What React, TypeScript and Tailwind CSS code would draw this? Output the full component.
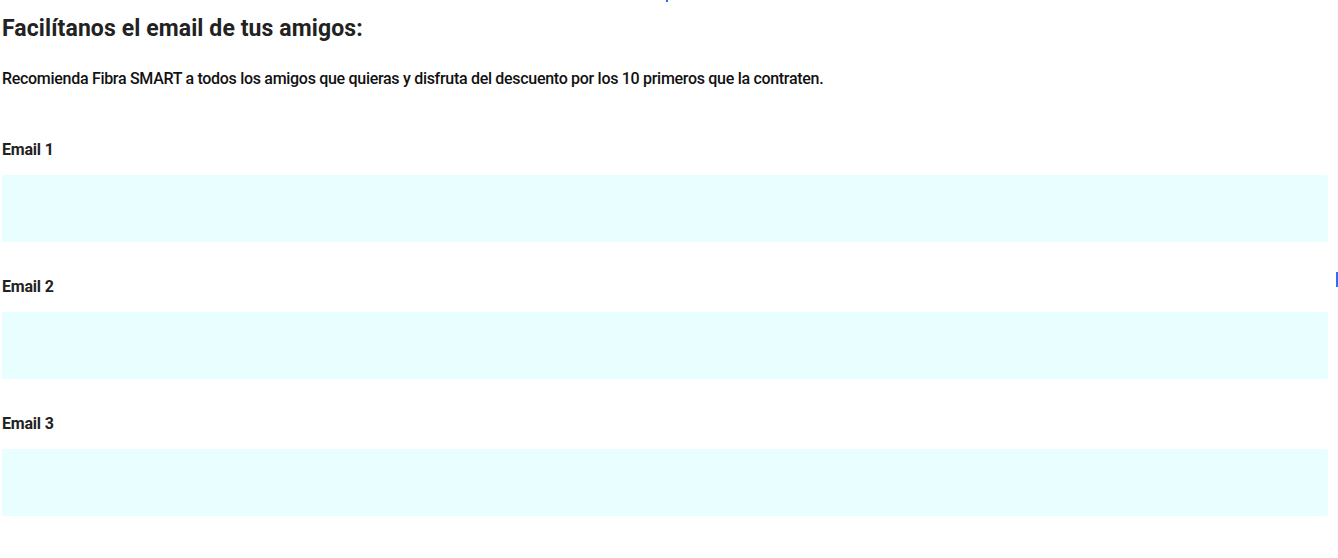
import React from "react";

const fields = ["Email 1", "Email 2", "Email 3"];

export default function App() {
  return (
    <div
      className="relative w-[1338px] h-[558px] bg-white text-[#1f1f1f] overflow-hidden"
      style={{ fontFamily: "Roboto, 'Liberation Sans', sans-serif" }}
    >
      <span className="absolute left-[666px] top-0 w-[2px] h-[2px] bg-[#2f6bff]" />
      <span className="absolute left-[1336px] top-[272px] w-[2px] h-[15px] bg-[#2f6bff]" />

      <div className="pl-[2px] pr-[10px] pt-[15px]">
        <h2 className="text-[23px] font-bold leading-[28px] tracking-[0.1px] text-[#222]">
          Facilítanos el email de tus amigos:
        </h2>
        <p className="mt-[25px] text-[16px] font-medium leading-[22px] tracking-[-0.3px] text-[#111]">
          Recomienda Fibra SMART a todos los amigos que quieras y disfruta del
          descuento por los 10 primeros que la contraten.
        </p>

        <div className="mt-[50px] flex flex-col gap-[35px]">
          {fields.map((f) => (
            <div key={f} className="flex flex-col">
              <label className="text-[16px] font-bold leading-[20px] tracking-[-0.2px] text-[#222]">
                {f}
              </label>
              <input
                type="email"
                className="mt-[15px] h-[67px] w-full rounded-[2px] bg-[#e8feff] px-3 outline-none"
              />
            </div>
          ))}
        </div>
      </div>
    </div>
  );
}
